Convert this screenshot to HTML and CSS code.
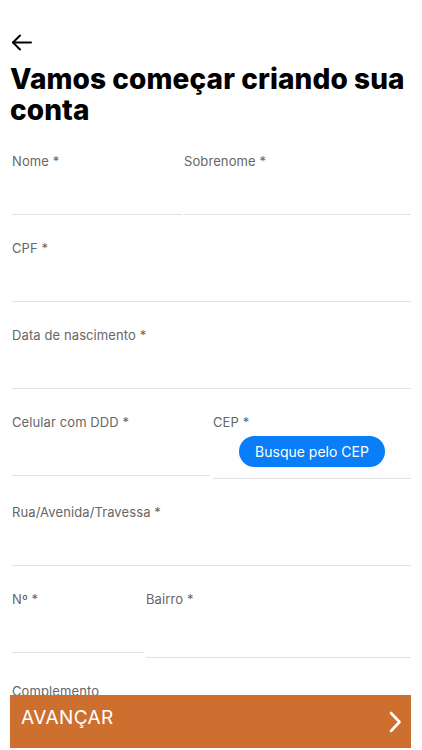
FILE: index.html
```html
<!DOCTYPE html>
<html lang="pt-BR">
<head>
    <meta charset="UTF-8">
    <meta name="viewport" content="width=device-width, initial-scale=1.0">
    <title>Cadastro</title>
    <link rel="stylesheet" href="styles.css">
</head>
<body>
    <div class="page">
        <!-- back arrow -->
        <a class="back" href="#">
            <svg width="21" height="17" viewBox="0 0 21 17" fill="none" stroke="#000" stroke-width="2" stroke-linecap="round" stroke-linejoin="round">
                <path d="M20 8.5H2"/>
                <path d="M9 1.5L2 8.5L9 15.5"/>
            </svg>
        </a>

        <h1>Vamos começar criando sua conta</h1>

        <form class="form">
            <div class="row row-name">
                <div class="field">
                    <label>Nome *</label>
                    <input type="text">
                </div>
                <div class="field">
                    <label>Sobrenome *</label>
                    <input type="text">
                </div>
            </div>

            <div class="field">
                <label>CPF *</label>
                <input type="text">
            </div>

            <div class="field">
                <label>Data de nascimento *</label>
                <input type="text">
            </div>

            <div class="row row-half">
                <div class="field">
                    <label>Celular com DDD *</label>
                    <input type="text">
                </div>
                <div class="field">
                    <label>CEP *</label>
                    <div class="cep-box">
                        <button type="button" class="cep-btn">Busque pelo CEP</button>
                    </div>
                </div>
            </div>

            <div class="field">
                <label>Rua/Avenida/Travessa *</label>
                <input type="text">
            </div>

            <div class="row row-number">
                <div class="field">
                    <label>Nº *</label>
                    <input type="text">
                </div>
                <div class="field">
                    <label>Bairro *</label>
                    <input type="text" class="tall">
                </div>
            </div>

            <div class="field">
                <label>Complemento</label>
                <input type="text">
            </div>
        </form>
    </div>

    <!-- fixed bottom button -->
    <button class="next">
        <span>AVANÇAR</span>
        <svg width="14" height="22" viewBox="0 0 14 22" fill="none" stroke="#fff" stroke-width="2.6" stroke-linecap="round" stroke-linejoin="round">
            <path d="M3 2L11.5 11L3 20"/>
        </svg>
    </button>
</body>
</html>
```

FILE: styles.css
```css
/* page */
html, body {
    margin: 0;
    height: 100%;
    overflow: hidden;
    background: #fff;
}

body {
    font-family: Inter, "Noto Sans", sans-serif;
    color: #000;
}

.page {
    padding: 0 11px 0 12px;
}

.back {
    display: block;
    width: 21px;
    height: 17px;
    margin: 34px 0 0 -1px;
}

.back svg {
    display: block;
}

h1 {
    margin: 13px -6px 0 -2px;
    font-size: 28px;
    line-height: 31px;
    font-weight: 800;
    letter-spacing: 0.1px;
}

/* form fields */
.form {
    margin-top: 25px;
}

.row {
    display: grid;
    gap: 2px;
}

.row-name {
    grid-template-columns: 170px minmax(0, 1fr);
}

.row-half {
    grid-template-columns: 198px minmax(0, 1fr);
    column-gap: 3px;
}

.row-number {
    grid-template-columns: 132px minmax(0, 1fr);
}

.field {
    display: flex;
    flex-direction: column;
    min-width: 0;
    margin-bottom: 23px;
}

.field label {
    font-size: 13px;
    line-height: 20px;
    color: #666;
    letter-spacing: 0.1px;
}

.field input {
    width: 100%;
    min-width: 0;
    height: 43px;
    padding: 0;
    border: none;
    border-bottom: 1px solid #e2e2e2;
    outline: none;
    background: transparent;
    font: inherit;
}

.field input.tall {
    height: 48px;
    background: #fefefe;
}

.cep-box {
    height: 47px;
    border-bottom: 1px solid #e2e2e2;
    background: #fefefe;
    display: flex;
    justify-content: center;
    align-items: flex-start;
    padding-top: 4px;
    box-sizing: border-box;
}

.cep-btn {
    height: 31px;
    width: 146px;
    border: none;
    border-radius: 16px;
    background: #0a7df8;
    color: #fff;
    font-family: Inter, "Noto Sans", sans-serif;
    font-size: 14px;
    cursor: pointer;
}

/* bottom button */
.next {
    position: fixed;
    left: 10px;
    right: 11px;
    bottom: 2px;
    height: 53px;
    border: none;
    background: #cd6f2f;
    color: #fff;
    display: flex;
    align-items: center;
    justify-content: space-between;
    padding: 0 9px 0 11px;
    font-family: Inter, "Noto Sans", sans-serif;
    font-size: 19px;
    letter-spacing: 0.4px;
    cursor: pointer;
}

.next span {
    margin-top: -8px;
}
```
